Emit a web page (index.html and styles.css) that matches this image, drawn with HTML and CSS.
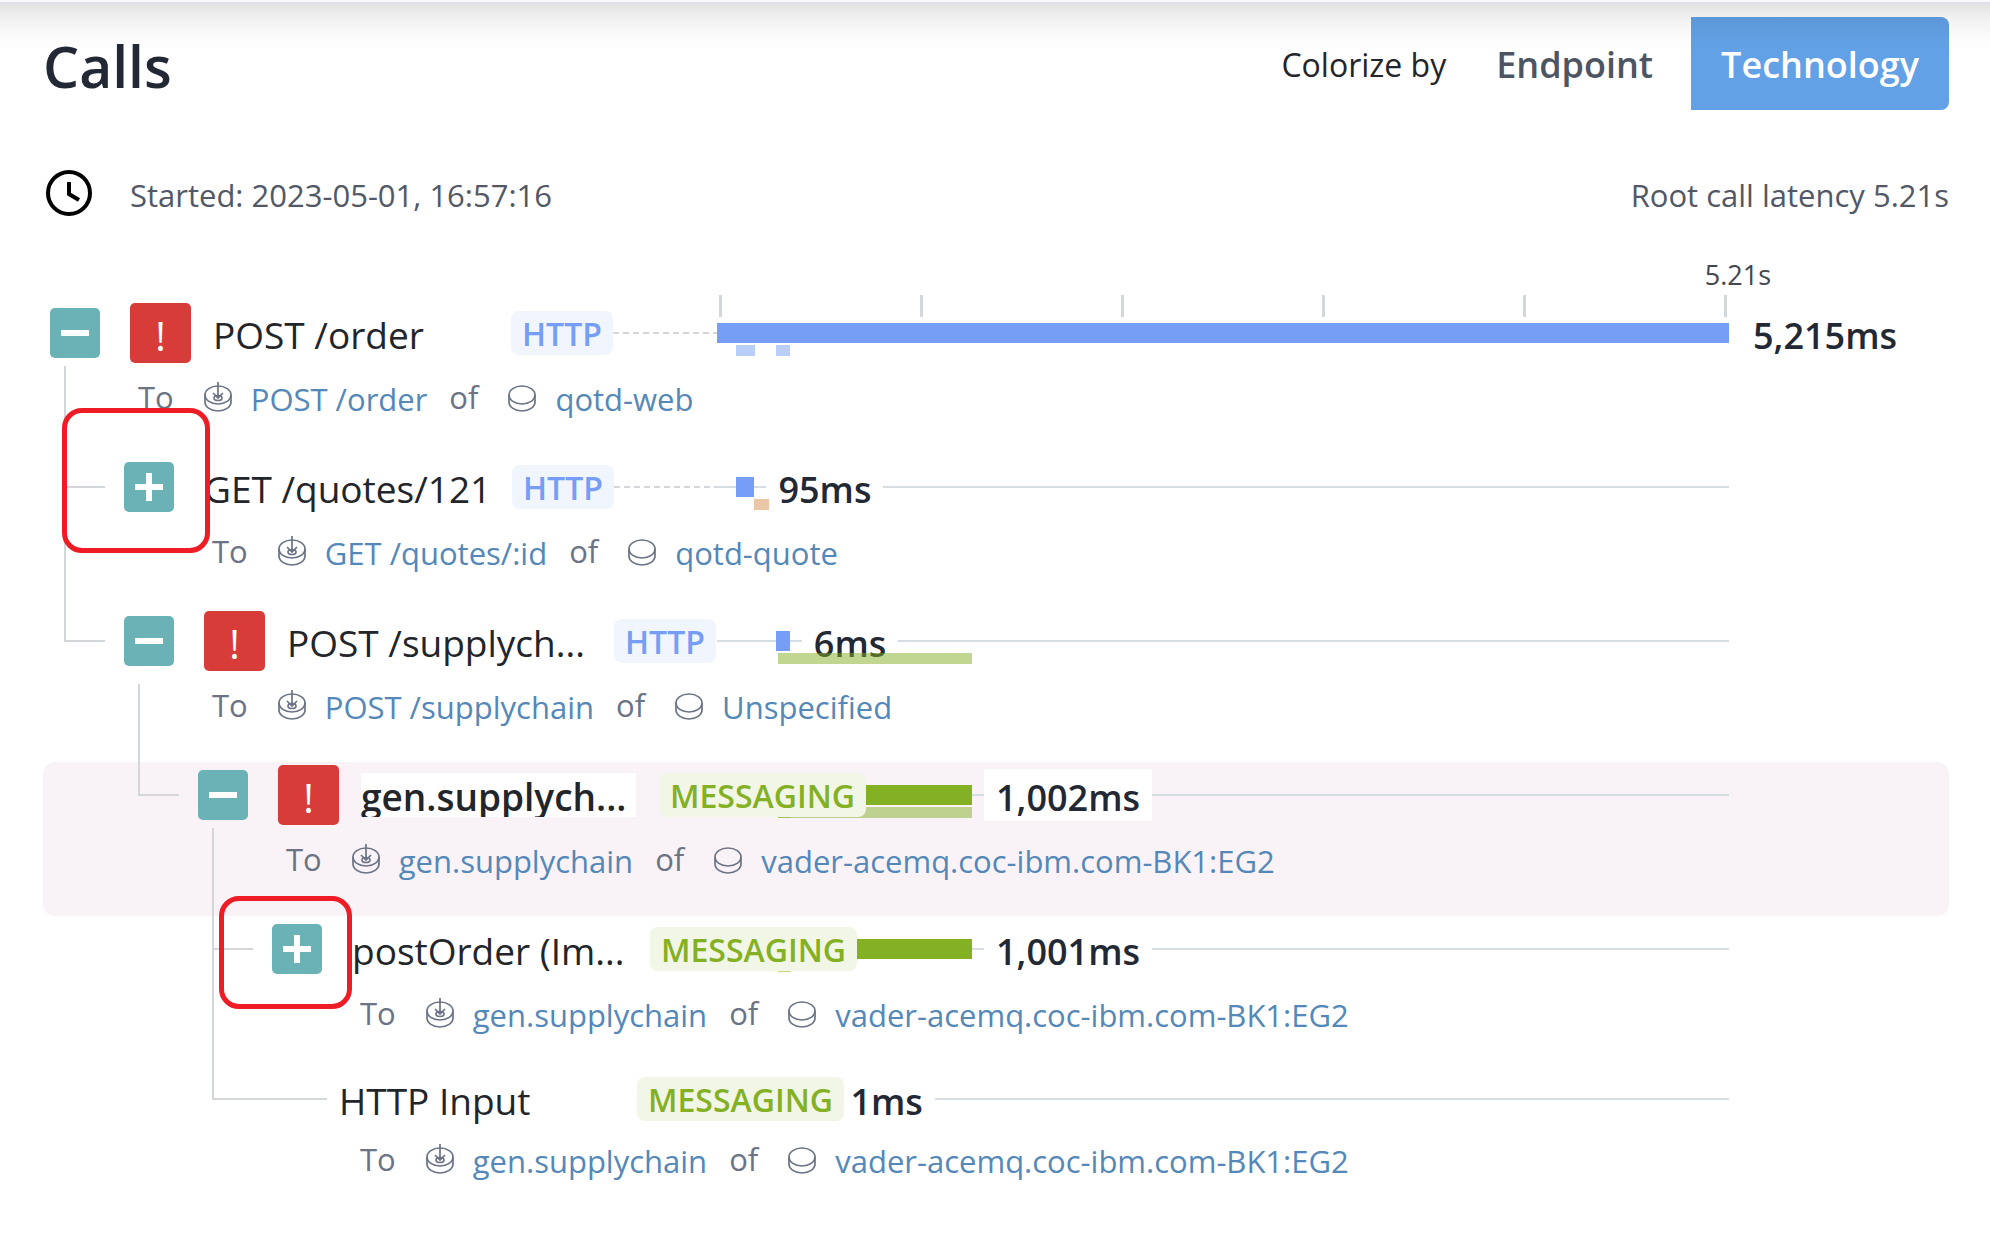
FILE: index.html
```html
<!DOCTYPE html>
<html lang="en">
<head>
<meta charset="utf-8">
<title>Calls</title>
<meta name="viewport" content="width=device-width, initial-scale=1">
<link rel="stylesheet" href="styles.css">
</head>
<body>
<svg class="sprite" aria-hidden="true">
  <symbol id="service" viewBox="0 0 30 32">
    <ellipse cx="15" cy="14" rx="13" ry="9"/>
    <path d="M2 14v7c0 5 6 9 13 9s13-4 13-9v-7"/>
  </symbol>
  <symbol id="endpoint" viewBox="0 0 30 32">
    <ellipse cx="15" cy="14" rx="13" ry="9"/>
    <path d="M2 14v7c0 5 6 9 13 9s13-4 13-9v-7"/>
    <ellipse cx="15" cy="17" rx="4" ry="2.5"/>
    <path d="M15 1v16M10 12l5 5 5-5"/>
  </symbol>
  <symbol id="minus" viewBox="0 0 50 50"><path d="M11 25h28"/></symbol>
  <symbol id="plus" viewBox="0 0 50 50"><path d="M11 25h28M25 11v28"/></symbol>
</svg>

<main class="panel">
  <header class="header">
    <h1 class="heading">Calls</h1>
    <div class="colorize" role="group" aria-labelledby="colorize-label">
      <span class="colorize-label" id="colorize-label">Colorize by</span>
      <button class="option" type="button">Endpoint</button>
      <button class="option option--active" type="button" aria-pressed="true">Technology</button>
    </div>
  </header>

  <div class="meta">
    <svg class="clock" viewBox="0 0 48 48" aria-hidden="true"><circle cx="24" cy="24" r="21"/><path d="M24 13v12l10 6"/></svg>
    <span>Started: 2023-05-01, 16:57:16</span>
    <span class="latency">Root call latency 5.21s</span>
  </div>

  <div class="axis">
    <div class="axis-scale">
      <div class="axis-label">5.21s</div>
      <div class="ticks"><i></i><i></i><i></i><i></i><i></i><i></i></div>
    </div>
  </div>

  <ul class="calls">
    <li class="call">
      <div class="timeline timeline--root">
        <span class="bar http" style="width:100%"></span><span class="line line--short"></span><span class="duration">5,215ms</span>
        <span class="child http" style="left:1.9%;width:1.9%"></span>
        <span class="child http" style="left:5.8%;width:1.4%"></span>
      </div>
      <div class="node">
        <div class="toggle-cell stem"><button class="toggle" type="button" aria-label="Collapse"><svg><use href="#minus"/></svg></button></div>
        <div class="body">
          <div class="head"><span class="error">!</span><span class="name">POST /order</span><span class="tag tag--http">HTTP</span><span class="dash"></span></div>
          <div class="target"><span>To</span><svg class="icon"><use href="#endpoint"/></svg><a href="#">POST /order</a><span>of</span><svg class="icon"><use href="#service"/></svg><a href="#">qotd-web</a></div>
        </div>
      </div>
    </li>

    <li class="call">
      <div class="timeline">
        <span class="line" style="width:1.9%"></span><span class="bar http" style="width:1.8%"></span><span class="line line--short"></span><span class="duration">95ms</span><span class="line line--rest"></span>
        <span class="child db" style="left:3.7%;width:1.4%"></span>
      </div>
      <div class="node">
        <div class="guide guide--branch"></div>
        <div class="toggle-cell"><button class="toggle" type="button" aria-label="Expand"><svg><use href="#plus"/></svg></button></div>
        <div class="body">
          <div class="head"><span class="name name--full">GET /quotes/121</span><span class="tag tag--http">HTTP</span><span class="dash"></span></div>
          <div class="target"><span>To</span><svg class="icon"><use href="#endpoint"/></svg><a href="#">GET /quotes/:id</a><span>of</span><svg class="icon"><use href="#service"/></svg><a href="#">qotd-quote</a></div>
        </div>
      </div>
      <div class="callout callout--first"></div>
    </li>

    <li class="call">
      <div class="timeline">
        <span class="line" style="width:5.8%"></span><span class="bar http" style="width:1.4%"></span><span class="line line--short"></span><span class="duration">6ms</span><span class="line line--rest"></span>
        <span class="child messaging" style="left:6%;width:19.2%"></span>
      </div>
      <div class="node">
        <div class="guide guide--end"></div>
        <div class="toggle-cell stem stem--low"><button class="toggle" type="button" aria-label="Collapse"><svg><use href="#minus"/></svg></button></div>
        <div class="body">
          <div class="head"><span class="error">!</span><span class="name name--wide">POST /supplych...</span><span class="tag tag--http">HTTP</span></div>
          <div class="target"><span>To</span><svg class="icon"><use href="#endpoint"/></svg><a href="#">POST /supplychain</a><span>of</span><svg class="icon"><use href="#service"/></svg><a href="#">Unspecified</a></div>
        </div>
      </div>
    </li>

    <li class="call call--selected">
      <div class="timeline">
        <span class="line" style="width:6%"></span><span class="bar messaging" style="width:19.2%"></span><span class="line line--short"></span><span class="duration">1,002ms</span><span class="line line--rest"></span>
        <span class="child messaging" style="left:6%;width:19.2%"></span>
        <span class="child messaging" style="left:6%;width:1.3%"></span>
      </div>
      <div class="node">
        <div class="guide"></div>
        <div class="guide guide--end"></div>
        <div class="toggle-cell stem"><button class="toggle" type="button" aria-label="Collapse"><svg><use href="#minus"/></svg></button></div>
        <div class="body">
          <div class="head"><span class="error">!</span><span class="name">gen.supplych...</span><span class="tag tag--messaging">MESSAGING</span></div>
          <div class="target"><span>To</span><svg class="icon"><use href="#endpoint"/></svg><a href="#">gen.supplychain</a><span>of</span><svg class="icon"><use href="#service"/></svg><a href="#">vader-acemq.coc-ibm.com-BK1:EG2</a></div>
        </div>
      </div>
    </li>

    <li class="call">
      <div class="timeline">
        <span class="line" style="width:6%"></span><span class="bar messaging" style="width:19.2%"></span><span class="line line--short"></span><span class="duration">1,001ms</span><span class="line line--rest"></span>
        <span class="child messaging" style="left:6%;width:1.3%"></span>
      </div>
      <div class="node">
        <div class="guide"></div>
        <div class="guide"></div>
        <div class="guide guide--branch"></div>
        <div class="toggle-cell"><button class="toggle" type="button" aria-label="Expand"><svg><use href="#plus"/></svg></button></div>
        <div class="body">
          <div class="head"><span class="name">postOrder (Im...</span><span class="tag tag--messaging">MESSAGING</span></div>
          <div class="target"><span>To</span><svg class="icon"><use href="#endpoint"/></svg><a href="#">gen.supplychain</a><span>of</span><svg class="icon"><use href="#service"/></svg><a href="#">vader-acemq.coc-ibm.com-BK1:EG2</a></div>
        </div>
      </div>
      <div class="callout callout--second"></div>
    </li>

    <li class="call call--leaf">
      <div class="timeline">
        <span class="line" style="width:12%"></span><span class="duration">1ms</span><span class="line line--rest"></span>
      </div>
      <div class="node">
        <div class="guide"></div>
        <div class="guide"></div>
        <div class="guide guide--end guide--long"></div>
        <div class="guide"></div>
        <div class="body">
          <div class="head"><span class="name">HTTP Input</span><span class="tag tag--messaging">MESSAGING</span></div>
          <div class="target"><span>To</span><svg class="icon"><use href="#endpoint"/></svg><a href="#">gen.supplychain</a><span>of</span><svg class="icon"><use href="#service"/></svg><a href="#">vader-acemq.coc-ibm.com-BK1:EG2</a></div>
        </div>
      </div>
    </li>
  </ul>
</main>
</body>
</html>
```
FILE: styles.css
```css
:root {
  --labels: 674px;
  --overflow: 220px;
  --row-head: 66px;
  --guide: #d3d6da;
  --line: #d6dde3;
}

* { box-sizing: border-box; }

body {
  margin: 0;
  background: #fff;
  color: #22252a;
  font-family: "Open Sans", "Noto Sans", sans-serif;
  font-size: 32px;
  line-height: 44px;
}

/* Edge and shadow of the bar above the panel */
body::before {
  content: "";
  position: absolute;
  z-index: 5;
  top: 0;
  left: 0;
  right: 0;
  height: 50px;
  border-top: 2px solid #fafafc;
  background:
    linear-gradient(#dfe1ea, #dfe1ea) top / 100% 2px no-repeat,
    linear-gradient(rgba(0, 0, 0, .12), rgba(0, 0, 0, .05) 35%, rgba(0, 0, 0, .01) 75%, transparent);
  pointer-events: none;
}

.sprite { position: absolute; width: 0; height: 0; }

button { font: inherit; border: 0; cursor: pointer; }

.panel { padding: 17px 41px 60px 43px; }

.header {
  display: flex;
  justify-content: space-between;
  align-items: center;
}

.heading {
  margin: 0;
  padding-top: 4px;
  color: #222834;
  font-size: 57px;
  font-weight: 600;
  line-height: 80px;
}

.colorize { display: flex; align-items: center; }

.colorize-label { margin-right: 20px; padding-top: 2px; }

.option {
  height: 93px;
  padding: 2px 30px 0;
  background: none;
  color: #4d5462;
  font-size: 36px;
  font-weight: 600;
}

.option--active {
  margin-left: 8px;
  border-radius: 0 8px 8px 0;
  background: #62a1e5;
  color: #fff;
}

.meta {
  display: flex;
  align-items: center;
  height: 48px;
  margin: 59px 0 38px;
  color: #525866;
  font-size: 31px;
}

.meta span { padding-top: 3px; }

.clock {
  width: 48px;
  height: 48px;
  margin: 0 37px 0 2px;
  fill: none;
  stroke: #000;
  stroke-width: 4;
}

.latency { margin-left: auto; }

.axis {
  display: grid;
  grid-template-columns: var(--labels) 1fr var(--overflow);
  margin-bottom: -17px;
}

.axis-scale { grid-column: 2; }

.axis-label {
  margin-right: -42px;
  color: #43474f;
  font-size: 27px;
  line-height: 40px;
  text-align: right;
}

.ticks {
  display: flex;
  justify-content: space-between;
  padding: 0 2px;
}

.ticks i { width: 3px; height: 22px; background: var(--guide); }

.calls { margin: 0; padding: 0; list-style: none; }

.call {
  position: relative;
  display: grid;
  grid-template-columns: var(--labels) 1fr var(--overflow);
  height: 154px;
  border-radius: 12px;
}

.call--selected { background: #f9f3f8; }

.call--leaf { --row-head: 58px; }

/* The labels share the grid row with the timeline and lie over it */
.node {
  z-index: 1;
  grid-area: 1 / 1;
  display: flex;
}

.timeline {
  position: relative;
  grid-area: 1 / 2;
  display: flex;
  align-items: center;
  height: var(--row-head);
}

.bar { flex: none; height: 20px; }
.line { flex: none; height: 2px; background: var(--line); }
.line--short { width: 12px; }
.line--rest { flex: 1; }
.timeline--root .line { background: none; }

.duration {
  padding: 6px 12px 0;
  background: #fff;
  color: #222834;
  font-size: 36px;
  font-weight: 600;
  line-height: 46px;
}

.child {
  position: absolute;
  top: 45px;
  height: 11px;
  opacity: .5;
}

.http { background: #769ef6; }
.messaging { background: #84b024; }
.db { background: #d58f50; }

.guide {
  position: relative;
  flex: none;
  width: 74px;
}

.guide--branch::before,
.guide--end::before,
.stem::before {
  content: "";
  position: absolute;
  top: 0;
  bottom: 0;
  left: 21px;
  width: 2px;
  background: var(--guide);
}

.guide--end::before { bottom: auto; height: calc(var(--row-head) / 2 + 1px); }
.stem::before { top: 66px; }
.stem--low::before { top: 76px; }

.guide--branch::after,
.guide--end::after {
  content: "";
  position: absolute;
  top: calc(var(--row-head) / 2 - 1px);
  left: 21px;
  width: 41px;
  height: 2px;
  background: var(--guide);
}

.guide--long::after { width: 115px; }

.toggle-cell {
  position: relative;
  flex: none;
  width: 87px;
  padding: 8px 0 0 7px;
}

.toggle {
  display: block;
  width: 50px;
  height: 50px;
  padding: 0;
  border-radius: 5px;
  background: #6ab2b5;
}

.toggle svg {
  display: block;
  width: 50px;
  height: 50px;
  stroke: #fff;
  stroke-width: 6;
}

.body {
  flex: 1;
  display: flex;
  flex-direction: column;
  min-width: 0;
}

.head {
  display: flex;
  align-items: center;
  height: var(--row-head);
}

.error {
  flex: none;
  width: 61px;
  height: 60px;
  margin-right: 22px;
  border-radius: 5px;
  background: #d83c39;
  color: #fff;
  font-size: 40px;
  line-height: 66px;
  text-align: center;
}

.name {
  flex: none;
  width: 275px;
  height: 44px;
  margin-right: 23px;
  padding-top: 2px;
  background: #fff;
  font-size: 37px;
  white-space: nowrap;
}

.name--full { width: 285px; }
.name--wide { width: 304px; }
.call--selected .name { font-weight: 600; overflow: hidden; }

.tag {
  flex: none;
  height: 44px;
  padding: 1px 11px 0;
  border-radius: 8px;
  font-weight: 600;
}

.tag--http { background: #f0f5fe; color: #769ef6; }
.tag--messaging { background: #f2f6e6; color: #84b024; }

.dash {
  flex: 1;
  height: 2px;
  background: repeating-linear-gradient(90deg, var(--guide) 0 6px, transparent 6px 10px);
}

.target {
  display: flex;
  align-items: center;
  padding: 9px 0 0 8px;
  color: #6b7385;
  font-size: 31px;
  white-space: nowrap;
}

.call--leaf .target { padding-left: 21px; }

.target a {
  flex: none;
  margin: 4px 22px 0 18px;
  color: #5488b8;
  line-height: 40px;
  text-decoration: none;
}

.icon {
  flex: none;
  width: 30px;
  height: 32px;
  margin-left: 29px;
  fill: none;
  stroke: #6b7385;
  stroke-width: 1.7;
}

.callout {
  position: absolute;
  z-index: 2;
  border: 5px solid #ee1c25;
  border-radius: 20px;
  pointer-events: none;
}

.callout--first { top: -46px; left: 19px; width: 148px; height: 145px; }
.callout--second { top: -20px; left: 176px; width: 133px; height: 113px; }
```
